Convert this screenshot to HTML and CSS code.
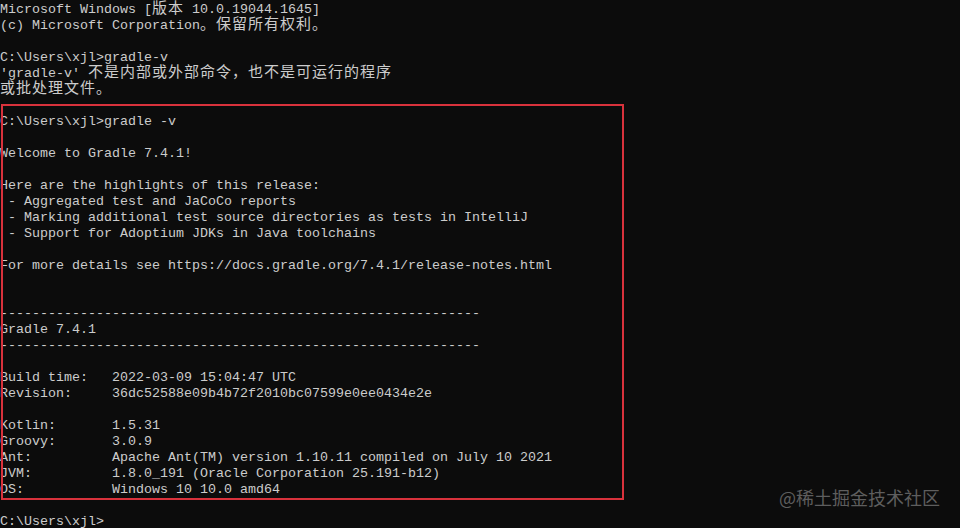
FILE: index.html
```html
<!DOCTYPE html>
<html lang="zh-CN">
<head>
<meta charset="utf-8">
<title>cmd - gradle -v</title>
<link rel="stylesheet" href="styles.css">
</head>
<body>
<main class="console">
<div class="line">Microsoft Windows [<span class="cjk">版本</span> 10.0.19044.1645]</div>
<div class="line">(c) Microsoft Corporation<span class="cjk">。保留所有权利。</span></div>
<div class="line"></div>
<div class="line">C:\Users\xjl&gt;gradle-v</div>
<div class="line">'gradle-v' <span class="cjk">不是内部或外部命令，也不是可运行的程序</span></div>
<div class="line"><span class="cjk">或批处理文件。</span></div>
<div class="line"></div>
<div class="line">C:\Users\xjl&gt;gradle -v</div>
<div class="line"></div>
<div class="line">Welcome to Gradle 7.4.1!</div>
<div class="line"></div>
<div class="line">Here are the highlights of this release:</div>
<div class="line"> - Aggregated test and JaCoCo reports</div>
<div class="line"> - Marking additional test source directories as tests in IntelliJ</div>
<div class="line"> - Support for Adoptium JDKs in Java toolchains</div>
<div class="line"></div>
<div class="line">For more details see https://docs.gradle.org/7.4.1/release-notes.html</div>
<div class="line"></div>
<div class="line"></div>
<div class="line">------------------------------------------------------------</div>
<div class="line">Gradle 7.4.1</div>
<div class="line">------------------------------------------------------------</div>
<div class="line"></div>
<div class="line">Build time:   2022-03-09 15:04:47 UTC</div>
<div class="line">Revision:     36dc52588e09b4b72f2010bc07599e0ee0434e2e</div>
<div class="line"></div>
<div class="line">Kotlin:       1.5.31</div>
<div class="line">Groovy:       3.0.9</div>
<div class="line">Ant:          Apache Ant(TM) version 1.10.11 compiled on July 10 2021</div>
<div class="line">JVM:          1.8.0_191 (Oracle Corporation 25.191-b12)</div>
<div class="line">OS:           Windows 10 10.0 amd64</div>
<div class="line"></div>
<div class="line">C:\Users\xjl&gt;</div>
</main>
<div class="highlight-box"></div>
<div class="watermark">@稀土掘金技术社区</div>
</body>
</html>
```

FILE: styles.css
```css
html, body {
  margin: 0;
  padding: 0;
  background: #0c0c0c;
  width: 960px;
  height: 528px;
  overflow: hidden;
}

body {
  position: relative;
}

.console {
  display: flex;
  flex-direction: column;
  padding: 2px 0 0 0;
  font-family: "Liberation Mono", "DejaVu Sans Mono", monospace;
  font-size: 13.333px;
  color: #cccccc;
}

.line {
  height: 16px;
  line-height: 16px;
  white-space: pre;
  overflow: visible;
}

.cjk {
  font-family: "Noto Sans CJK SC", sans-serif;
  font-size: 15px;
  line-height: 0;
  letter-spacing: 1px;
  vertical-align: baseline;
}

.highlight-box {
  position: absolute;
  left: 1px;
  top: 104px;
  width: 619px;
  height: 392px;
  border: 2px solid #d9323c;
}

.watermark {
  position: absolute;
  right: 20px;
  top: 484px;
  font-family: "Noto Sans CJK SC", "Noto Sans", sans-serif;
  font-size: 18px;
  line-height: 26px;
  color: #5e5e5e;
}
```
